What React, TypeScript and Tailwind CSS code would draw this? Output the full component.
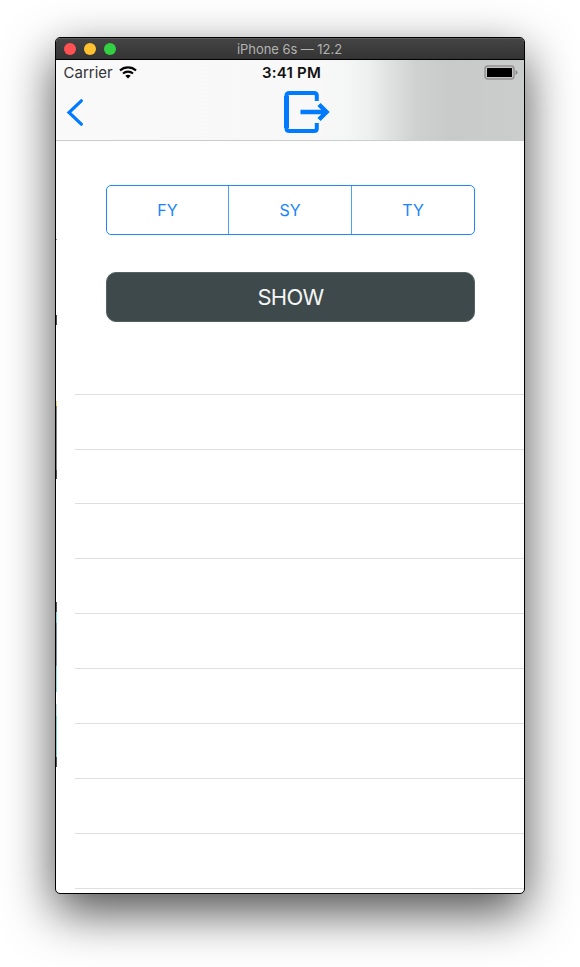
import React from "react";

const SEGMENTS = ["FY", "SY", "TY"];
const ROWS = [0, 1, 2, 3, 4, 5, 6, 7, 8];

// Sliver of the previous screen that stays visible along the left edge.
const EDGE = [
  "h-[98px]",
  "h-px bg-[#999999]",
  "h-[75px]",
  "h-[10px] bg-[#4a4a4a]",
  "h-[76px]",
  "h-[5px] bg-[#f5d476]",
  "h-[64px] bg-[#858585]",
  "h-[9px] bg-[#505050]",
  "h-[123px]",
  "h-[10px] bg-[#555555]",
  "h-[11px] bg-[#7fd6d3]",
  "h-[43px] bg-[#8795a3]",
  "h-[26px] bg-[#8bdcda]",
  "h-[12px]",
  "h-[12px] bg-[#b9dcdc]",
  "h-[41px] bg-[#7bd0c8]",
  "h-[10px] bg-[#555555]",
];

function TitleBar() {
  return (
    <div className="grid h-[22px] shrink-0 grid-cols-[80px_1fr_80px] items-center border-b border-black bg-linear-to-b from-[#454545] to-[#343434] shadow-[inset_0_1px_0_#5c5c5c]">
      <div className="flex gap-2 pl-2">
        <span className="size-3 rounded-full bg-[#ff5052]" />
        <span className="size-3 rounded-full bg-[#ffc130]" />
        <span className="size-3 rounded-full bg-[#34d044]" />
      </div>
      <div className="pt-px pr-px text-center text-[13px] leading-5 tracking-[-0.06px] text-[#b3b3b3]">iPhone 6s — 12.2</div>
    </div>
  );
}

function StatusBar() {
  return (
    <div className="grid h-[25px] grid-cols-3 items-center">
      <div className="flex items-center gap-[6px] pl-[7.5px] text-[15px] text-[#333333]">
        <span className="pt-[2px]">Carrier</span>
        <svg width="18" height="13" viewBox="0 0 18 13" fill="none" stroke="#050505">
          <path d="M1 4.500C5.500 .4 12.500 .4 17 4.500" strokeWidth="2.300" />
          <path d="M4 7.500C6.800 5 11.200 5 14 7.500" strokeWidth="2.100" />
          <path d="M6.300 9.800C7.800 8.500 10.200 8.500 11.700 9.800L9 12.500Z" fill="#050505" stroke="none" />
        </svg>
      </div>
      <div className="pt-px pl-[3px] text-center text-[15px] font-semibold tracking-[0.2px] text-[#111111]">3:41 PM</div>
      <div className="flex items-center justify-end pr-[6.5px]">
        <svg width="34" height="15" viewBox="0 0 34 15">
          <rect x="1" y="1" width="29" height="13" rx="3" fill="#c6c6c6" stroke="#929292" strokeWidth="1.500" />
          <rect x="3" y="3" width="25" height="9" rx="0.500" fill="#000" />
          <path d="M31.500 5.300Q33.500 5.800 33.500 7.500T31.500 9.700Z" fill="#888" />
        </svg>
      </div>
    </div>
  );
}

function NavBar() {
  return (
    <div className="grid h-[53px] grid-cols-[228px_1fr] items-center">
      <svg className="ml-[10px]" width="18" height="28" viewBox="0 0 18 28" fill="none" stroke="#007aff" strokeWidth="3.200" strokeLinecap="round">
        <path d="M15.300 2.800L3 14.500L15.300 26.200" />
      </svg>
      <svg width="46" height="42" viewBox="0 0 46 42" fill="none" stroke="#007aff">
        <path d="M32.800 10V4.500Q32.800 2 30 2H5.500Q2.500 2 2.500 4.500V37.500Q2.500 40 5.500 40H30Q32.800 40 32.800 37.500V32" strokeWidth="4" />
        <path d="M2.500 5V37" strokeWidth="5" />
        <path d="M16.500 21H42" strokeWidth="4.500" />
        <path d="M35 13.500L42.500 21L35 28.500" strokeWidth="4.500" />
      </svg>
    </div>
  );
}

export default function App() {
  return (
    <main className="flex h-[967px] w-[580px] overflow-hidden bg-white pt-[37px] pl-[55px] font-['Inter','Liberation_Sans',sans-serif]">
      <section className="flex h-[857px] w-[470px] flex-col overflow-hidden rounded-[5px] border border-black bg-white shadow-[0_18px_50px_rgba(0,0,0,0.7)]">
        <TitleBar />
        <header className="h-[81px] shrink-0 border-b border-[#cacccc] bg-[linear-gradient(90deg,#f9f9f9_0%,#f8f8f8_55%,#f5f6f6_62%,#eff0f0_67%,#dedfdf_72%,#cecece_77%,#c6c6c6_84%,#c7c7c7_100%)]">
          <div className="h-full bg-[linear-gradient(90deg,transparent_62%,rgba(215,230,225,0.12)_75%,rgba(220,235,230,0.16)_100%)]">
            <StatusBar />
            <NavBar />
          </div>
        </header>
        <div className="flex min-h-0 flex-1">
          <div className="flex w-px shrink-0 flex-col">
            {EDGE.map((style, i) => (
              <span key={i} className={`shrink-0 ${style}`} />
            ))}
          </div>
          <div className="flex flex-1 flex-col">
            <div className="mt-[44px] mr-[49px] ml-[49px] grid h-[50px] grid-cols-[122px_123px_1fr] divide-x divide-[#4ba1ff] rounded-[5px] border-[1.5px] border-[#1f88ff] text-[16px] text-[#1683ff]">
              {SEGMENTS.map((label) => (
                <button key={label} className="text-center">{label}</button>
              ))}
            </div>
            <button className="mt-[37px] mr-[49px] ml-[49px] h-[50px] rounded-[10px] border border-[#566261] bg-[#3d494a] pt-px text-[22px] tracking-[-0.7px] text-[#f4f5f5]">
              SHOW
            </button>
            <div className="mt-[71.6px] ml-[18px] border-t border-[#dedfe0]">
              {ROWS.map((row) => (
                <div key={row} className="h-[54.93px] border-b border-[#dedfe0]" />
              ))}
            </div>
          </div>
        </div>
      </section>
    </main>
  );
}
